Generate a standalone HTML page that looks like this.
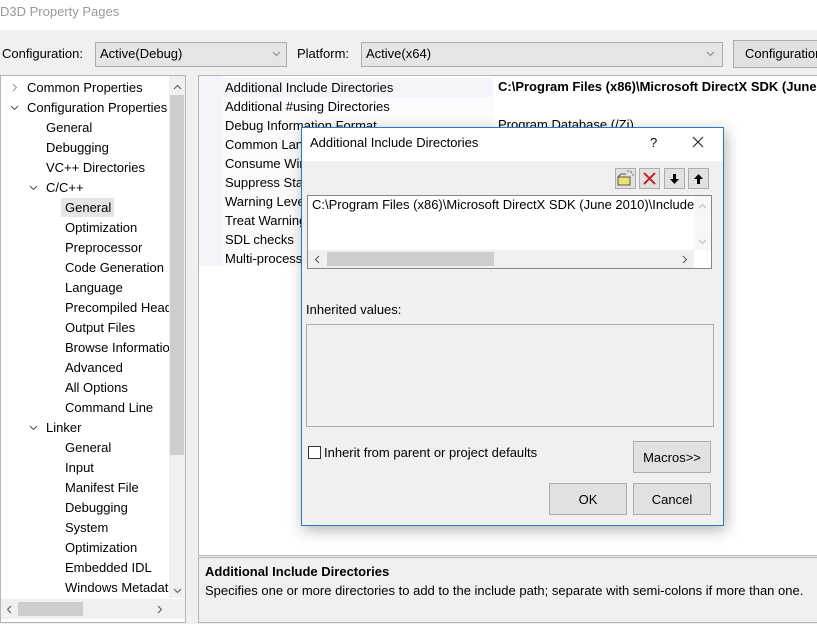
<!DOCTYPE html>
<html><head><style>
*{box-sizing:border-box;margin:0;padding:0}
html,body{width:817px;height:624px;overflow:hidden}
body{background:#f0f0f0;font-family:"Liberation Sans","Noto Sans CJK SC",sans-serif;font-size:13px;color:#000;position:relative}
.a{position:absolute;white-space:nowrap}
.clip{overflow:hidden}
.btn{position:absolute;background:#e1e1e1;border:1px solid #adadad;text-align:center}
svg.c{position:absolute}
</style></head><body>
<div class="a" style="left:0;top:0;width:817px;height:30px;background:#fff"></div>
<div class="a" style="left:0;top:4px;color:#999;font-size:13px">D3D Property Pages</div>
<div class="a" style="left:2px;top:46px">Configuration:</div>
<div class="a" style="left:95px;top:42px;width:192px;height:25px;background:#e5e5e5;border:1px solid #acacac"></div>
<div class="a" style="left:100px;top:46px">Active(Debug)</div>
<svg class="c" style="left:272px;top:51px" width="9" height="6"><path d="M1 1l3.5 3.5L8 1" stroke="#888" fill="none"/></svg>
<div class="a" style="left:297px;top:46px">Platform:</div>
<div class="a" style="left:361px;top:42px;width:362px;height:25px;background:#e5e5e5;border:1px solid #acacac"></div>
<div class="a" style="left:366px;top:46px">Active(x64)</div>
<svg class="c" style="left:706px;top:51px" width="9" height="6"><path d="M1 1l3.5 3.5L8 1" stroke="#888" fill="none"/></svg>
<div class="btn clip" style="left:733px;top:40px;width:84px;height:28px;padding-top:5px;text-align:left;padding-left:11px;border-right:none">Configuration</div>

<!-- tree -->
<div class="a" style="left:0;top:75px;width:186px;height:548px;background:#fff;border:1px solid #b5b5b5"></div>
<div class="a" style="left:169px;top:76px;width:16px;height:522px;background:#f0f0f0"></div>
<div class="a" style="left:170px;top:95px;width:14px;height:360px;background:#cdcdcd"></div>
<svg class="c" style="left:173px;top:84px" width="9" height="6"><path d="M1 5l3.5-3.5L8 5" stroke="#555" fill="none"/></svg>
<svg class="c" style="left:173px;top:588px" width="9" height="6"><path d="M1 1l3.5 3.5L8 1" stroke="#555" fill="none"/></svg>
<div class="a" style="left:1px;top:599px;width:184px;height:20px;background:#f0f0f0"></div>
<div class="a" style="left:18px;top:602px;width:65px;height:14px;background:#cdcdcd"></div>
<svg class="c" style="left:6px;top:605px" width="6" height="9"><path d="M5 1L1.5 4.5L5 8" stroke="#555" fill="none"/></svg>
<svg class="c" style="left:157px;top:605px" width="6" height="9"><path d="M1 1l3.5 3.5L1 8" stroke="#555" fill="none"/></svg>
<div class="a" style="left:61px;top:198px;width:53px;height:19px;background:#e5e5e5"></div>
<svg class="c" style="left:12px;top:83px" width="6" height="9"><path d="M1 1l3.5 3.5L1 8" stroke="#999" fill="none"/></svg>
<svg class="c" style="left:10px;top:105px" width="9" height="6"><path d="M1 1l3.5 3.5L8 1" stroke="#555" fill="none"/></svg>
<svg class="c" style="left:29px;top:185px" width="9" height="6"><path d="M1 1l3.5 3.5L8 1" stroke="#555" fill="none"/></svg>
<svg class="c" style="left:29px;top:425px" width="9" height="6"><path d="M1 1l3.5 3.5L8 1" stroke="#555" fill="none"/></svg>
<div class="a clip" style="left:27px;top:78px;line-height:20px;width:142px">Common Properties<br>Configuration Properties</div>
<div class="a" style="left:46px;top:118px;line-height:20px">General<br>Debugging<br>VC++ Directories<br>C/C++</div>
<div class="a clip" style="left:65px;top:198px;line-height:20px;width:104px">General<br>Optimization<br>Preprocessor<br>Code Generation<br>Language<br>Precompiled Headers<br>Output Files<br>Browse Information<br>Advanced<br>All Options<br>Command Line</div>
<div class="a" style="left:46px;top:418px;line-height:20px">Linker</div>
<div class="a clip" style="left:65px;top:438px;line-height:20px;width:104px">General<br>Input<br>Manifest File<br>Debugging<br>System<br>Optimization<br>Embedded IDL<br>Windows Metadata</div>

<!-- grid -->
<div class="a" style="left:198px;top:75px;width:619px;height:481px;background:#fff;border:1px solid #b5b5b5;border-right:none"></div>
<div class="a" style="left:199px;top:76px;width:23px;height:190px;background:#f3f5fa"></div>
<div class="a" style="left:222px;top:78px;width:271px;height:19px;background:#f3f5fa"></div>
<div class="a" style="left:222px;top:97px;width:271px;height:169px;background:#fafbfd"></div>
<div class="a clip" style="left:225px;top:78px;line-height:19px;width:270px">Additional Include Directories<br>Additional #using Directories<br>Debug Information Format<br>Common Language RunTime Support<br>Consume Windows Runtime Extension<br>Suppress Startup Banner<br>Warning Level<br>Treat Warnings As Errors<br>SDL checks<br>Multi-processor Compilation</div>
<div class="a clip" style="left:498px;top:79px;font-weight:bold;width:319px">C:\Program Files (x86)\Microsoft DirectX SDK (June 2010)\Include</div>
<div class="a" style="left:498px;top:117px">Program Database (/Zi)</div>

<!-- description -->
<div class="a" style="left:198px;top:557px;width:619px;height:66px;background:#f0f0f0;border:1px solid #b5b5b5;border-right:none"></div>
<div class="a" style="left:205px;top:564px;font-weight:bold">Additional Include Directories</div>
<div class="a clip" style="left:205px;top:583px;width:612px">Specifies one or more directories to add to the include path; separate with semi-colons if more than one.</div>

<!-- dialog -->
<div class="a" style="left:301px;top:127px;width:423px;height:399px;background:#f0f0f0;border:1px solid #2b79c2;box-shadow:2px 4px 14px rgba(0,0,0,.3)"></div>
<div class="a" style="left:302px;top:128px;width:421px;height:33px;background:#fff"></div>
<div class="a" style="left:310px;top:135px">Additional Include Directories</div>
<div class="a" style="left:650px;top:135px">?</div>
<svg class="c" style="left:692px;top:136px" width="12" height="12"><path d="M1 1l10 10M11 1L1 11" stroke="#222" stroke-width="1.1"/></svg>
<div class="btn" style="left:615px;top:168px;width:21px;height:21px"><svg width="19" height="19"><rect x="2" y="8" width="12" height="8" fill="#eee36a" stroke="#555"/><path d="M2 8l3-3h5" stroke="#555" fill="none"/><path d="M14 2l2 2M16 6h2M12 3v-2" stroke="#777"/></svg></div>
<div class="btn" style="left:639px;top:168px;width:21px;height:21px"><svg width="19" height="19"><path d="M4 4l11 11M15 4L4 15" stroke="#c0282c" stroke-width="2"/></svg></div>
<div class="btn" style="left:664px;top:168px;width:21px;height:21px"><svg width="19" height="19"><path d="M9.5 5v5" stroke="#000" stroke-width="3"/><path d="M5 10h9l-4.5 5z" fill="#000"/></svg></div>
<div class="btn" style="left:688px;top:168px;width:21px;height:21px"><svg width="19" height="19"><path d="M9.5 9v6" stroke="#000" stroke-width="3"/><path d="M5 10h9l-4.5-5z" fill="#000"/></svg></div>
<div class="a" style="left:307px;top:195px;width:405px;height:74px;background:#fff;border:1px solid #828790"></div>
<div class="a" style="left:694px;top:196px;width:17px;height:54px;background:#f7f7f7"></div>
<svg class="c" style="left:698px;top:203px" width="9" height="6"><path d="M1 5l3.5-3.5L8 5" stroke="#bbb" fill="none"/></svg>
<svg class="c" style="left:698px;top:239px" width="9" height="6"><path d="M1 1l3.5 3.5L8 1" stroke="#bbb" fill="none"/></svg>
<div class="a clip" style="left:312px;top:197px;width:382px">C:\Program Files (x86)\Microsoft DirectX SDK (June 2010)\Include</div>
<div class="a" style="left:308px;top:250px;width:386px;height:18px;background:#f0f0f0"></div>
<div class="a" style="left:327px;top:252px;width:167px;height:14px;background:#cdcdcd"></div>
<svg class="c" style="left:314px;top:255px" width="6" height="9"><path d="M5 1L1.5 4.5L5 8" stroke="#555" fill="none"/></svg>
<svg class="c" style="left:682px;top:255px" width="6" height="9"><path d="M1 1l3.5 3.5L1 8" stroke="#555" fill="none"/></svg>
<div class="a" style="left:306px;top:302px">Inherited values:</div>
<div class="a" style="left:306px;top:324px;width:408px;height:103px;background:#f0f0f0;border:1px solid #adadad"></div>
<div class="a" style="left:308px;top:446px;width:13px;height:13px;background:#fff;border:1px solid #333"></div>
<div class="a" style="left:324px;top:445px">Inherit from parent or project defaults</div>
<div class="btn" style="left:633px;top:441px;width:78px;height:32px;padding-top:8px">Macros&gt;&gt;</div>
<div class="btn" style="left:549px;top:483px;width:78px;height:32px;padding-top:8px">OK</div>
<div class="btn" style="left:633px;top:483px;width:78px;height:32px;padding-top:8px">Cancel</div>
</body></html>
